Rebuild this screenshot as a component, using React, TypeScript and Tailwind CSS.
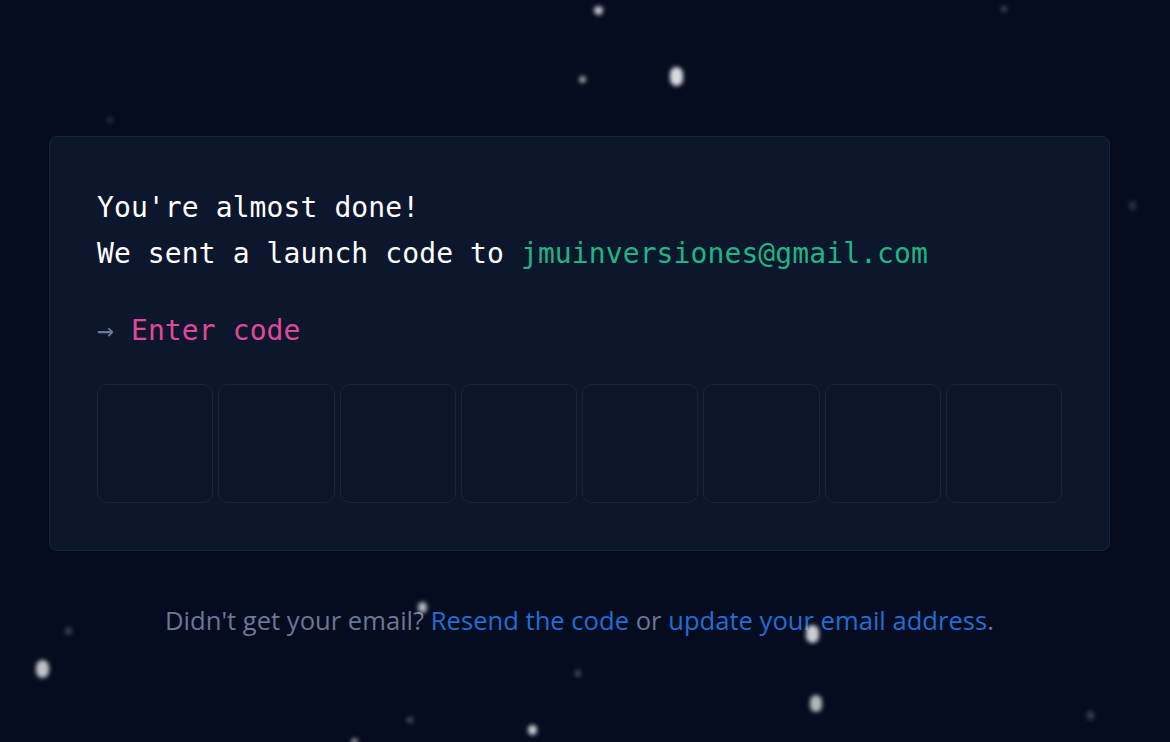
import React from "react";

const stars: { x: number; y: number; w: number; h: number; o: number }[] = [
  { x: 598, y: 10, w: 9, h: 9, o: 0.75 },
  { x: 582, y: 79, w: 7, h: 7, o: 0.6 },
  { x: 676, y: 76, w: 13, h: 19, o: 0.85 },
  { x: 110, y: 120, w: 6, h: 6, o: 0.15 },
  { x: 1004, y: 9, w: 6, h: 6, o: 0.25 },
  { x: 1132, y: 205, w: 7, h: 9, o: 0.15 },
  { x: 42, y: 669, w: 13, h: 18, o: 0.75 },
  { x: 422, y: 607, w: 9, h: 11, o: 0.7 },
  { x: 812, y: 634, w: 13, h: 18, o: 0.8 },
  { x: 816, y: 703, w: 12, h: 17, o: 0.7 },
  { x: 532, y: 730, w: 9, h: 10, o: 0.8 },
  { x: 578, y: 673, w: 6, h: 7, o: 0.25 },
  { x: 410, y: 720, w: 6, h: 6, o: 0.3 },
  { x: 68, y: 631, w: 7, h: 8, o: 0.2 },
  { x: 1090, y: 715, w: 7, h: 9, o: 0.2 },
  { x: 354, y: 741, w: 7, h: 7, o: 0.5 },
];

export default function App() {
  return (
    <div className="relative w-[1170px] h-[742px] overflow-hidden bg-[#050c1f]">
      <div className="pt-[136px] pl-[49px] pr-[60px]">
        <div className="rounded-[8px] border border-[#1a2437] bg-[#0c162c] px-[47px] pt-[48px] pb-[47px]">
          <div className="font-['DejaVu_Sans_Mono',monospace] text-[28px] leading-[46px] text-white tracking-[0.1px]">
            <div>You're almost done!</div>
            <div>
              We sent a launch code to{" "}
              <span className="text-[#1fb583]">jmuinversiones@gmail.com</span>
            </div>
            <div className="mt-[31px]">
              <span className="text-[#6b7a96]">→</span>{" "}
              <span className="text-[#e0489a]">Enter code</span>
            </div>
          </div>
          <div className="mt-[30px] flex gap-[5px]">
            {Array.from({ length: 8 }).map((_, i) => (
              <div
                key={i}
                className="h-[119px] flex-1 rounded-[10px] border border-[#1b2539] bg-[#0b152b]"
              />
            ))}
          </div>
        </div>
      </div>
      <div className="mt-[53px] pr-[11px] text-center font-['Open_Sans',sans-serif] text-[25.6px] leading-[34px] text-[#6a7796]">
        Didn't get your email?{" "}
        <span className="text-[#1f6fd6]">Resend the code</span> or{" "}
        <span className="text-[#1f6fd6]">update your email address</span>.
      </div>
      {stars.map((s, i) => (
        <div
          key={i}
          className="absolute rounded-full bg-white blur-[2px]"
          style={{
            left: s.x - s.w / 2,
            top: s.y - s.h / 2,
            width: s.w,
            height: s.h,
            opacity: s.o,
          }}
        />
      ))}
    </div>
  );
}
